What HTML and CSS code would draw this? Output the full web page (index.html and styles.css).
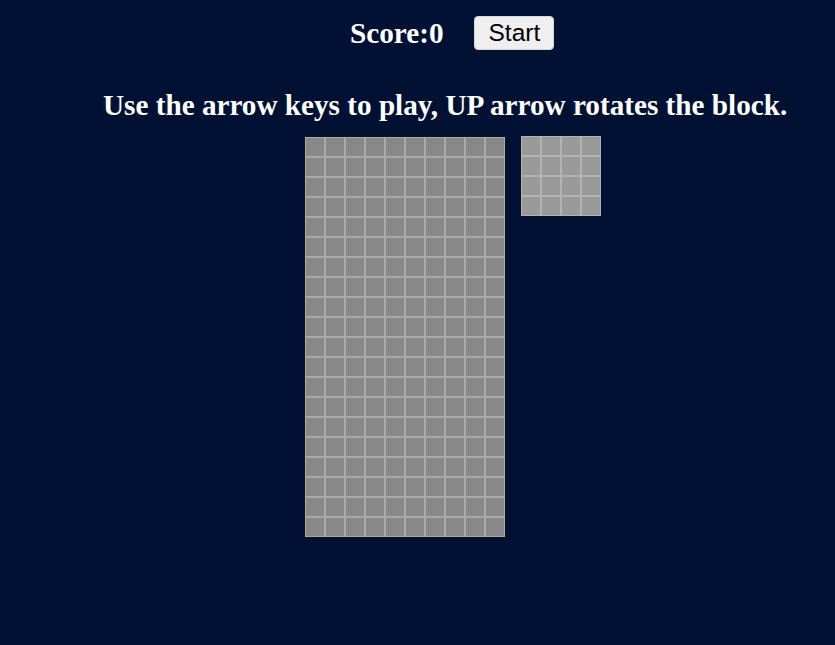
FILE: index.html
```html
<!DOCTYPE html>
<html>
<head>
<meta charset="utf-8">
<title>Tetris</title>
<link rel="stylesheet" href="styles.css">
</head>
<body>
<div class="top">
  <span class="score">Score:0</span>
  <button class="start">Start</button>
</div>
<h2 class="help">Use the arrow keys to play, UP arrow rotates the block.</h2>
<div class="game">
  <div class="board">
    <div class="c"></div><div class="c"></div><div class="c"></div><div class="c"></div><div class="c"></div><div class="c"></div><div class="c"></div><div class="c"></div><div class="c"></div><div class="c"></div>
    <div class="c"></div><div class="c"></div><div class="c"></div><div class="c"></div><div class="c"></div><div class="c"></div><div class="c"></div><div class="c"></div><div class="c"></div><div class="c"></div>
    <div class="c"></div><div class="c"></div><div class="c"></div><div class="c"></div><div class="c"></div><div class="c"></div><div class="c"></div><div class="c"></div><div class="c"></div><div class="c"></div>
    <div class="c"></div><div class="c"></div><div class="c"></div><div class="c"></div><div class="c"></div><div class="c"></div><div class="c"></div><div class="c"></div><div class="c"></div><div class="c"></div>
    <div class="c"></div><div class="c"></div><div class="c"></div><div class="c"></div><div class="c"></div><div class="c"></div><div class="c"></div><div class="c"></div><div class="c"></div><div class="c"></div>
    <div class="c"></div><div class="c"></div><div class="c"></div><div class="c"></div><div class="c"></div><div class="c"></div><div class="c"></div><div class="c"></div><div class="c"></div><div class="c"></div>
    <div class="c"></div><div class="c"></div><div class="c"></div><div class="c"></div><div class="c"></div><div class="c"></div><div class="c"></div><div class="c"></div><div class="c"></div><div class="c"></div>
    <div class="c"></div><div class="c"></div><div class="c"></div><div class="c"></div><div class="c"></div><div class="c"></div><div class="c"></div><div class="c"></div><div class="c"></div><div class="c"></div>
    <div class="c"></div><div class="c"></div><div class="c"></div><div class="c"></div><div class="c"></div><div class="c"></div><div class="c"></div><div class="c"></div><div class="c"></div><div class="c"></div>
    <div class="c"></div><div class="c"></div><div class="c"></div><div class="c"></div><div class="c"></div><div class="c"></div><div class="c"></div><div class="c"></div><div class="c"></div><div class="c"></div>
    <div class="c"></div><div class="c"></div><div class="c"></div><div class="c"></div><div class="c"></div><div class="c"></div><div class="c"></div><div class="c"></div><div class="c"></div><div class="c"></div>
    <div class="c"></div><div class="c"></div><div class="c"></div><div class="c"></div><div class="c"></div><div class="c"></div><div class="c"></div><div class="c"></div><div class="c"></div><div class="c"></div>
    <div class="c"></div><div class="c"></div><div class="c"></div><div class="c"></div><div class="c"></div><div class="c"></div><div class="c"></div><div class="c"></div><div class="c"></div><div class="c"></div>
    <div class="c"></div><div class="c"></div><div class="c"></div><div class="c"></div><div class="c"></div><div class="c"></div><div class="c"></div><div class="c"></div><div class="c"></div><div class="c"></div>
    <div class="c"></div><div class="c"></div><div class="c"></div><div class="c"></div><div class="c"></div><div class="c"></div><div class="c"></div><div class="c"></div><div class="c"></div><div class="c"></div>
    <div class="c"></div><div class="c"></div><div class="c"></div><div class="c"></div><div class="c"></div><div class="c"></div><div class="c"></div><div class="c"></div><div class="c"></div><div class="c"></div>
    <div class="c"></div><div class="c"></div><div class="c"></div><div class="c"></div><div class="c"></div><div class="c"></div><div class="c"></div><div class="c"></div><div class="c"></div><div class="c"></div>
    <div class="c"></div><div class="c"></div><div class="c"></div><div class="c"></div><div class="c"></div><div class="c"></div><div class="c"></div><div class="c"></div><div class="c"></div><div class="c"></div>
    <div class="c"></div><div class="c"></div><div class="c"></div><div class="c"></div><div class="c"></div><div class="c"></div><div class="c"></div><div class="c"></div><div class="c"></div><div class="c"></div>
    <div class="c"></div><div class="c"></div><div class="c"></div><div class="c"></div><div class="c"></div><div class="c"></div><div class="c"></div><div class="c"></div><div class="c"></div><div class="c"></div>
  </div>
  <div class="next">
    <div class="n"></div><div class="n"></div><div class="n"></div><div class="n"></div>
    <div class="n"></div><div class="n"></div><div class="n"></div><div class="n"></div>
    <div class="n"></div><div class="n"></div><div class="n"></div><div class="n"></div>
    <div class="n"></div><div class="n"></div><div class="n"></div><div class="n"></div>
  </div>
</div>
</body>
</html>
```
FILE: styles.css
```css
html, body {
  background: #001133;
}
body {
  margin: 8px;
  font-family: "Liberation Serif", "Times New Roman", serif;
  color: #ffffff;
}
.top {
  display: flex;
  align-items: center;
  gap: 31px;
  margin-top: 8px;
  padding-left: 342px;
  height: 34px;
}
.score {
  font-weight: bold;
  font-size: 29.2px;
  line-height: 33px;
}
.start {
  font-family: "Liberation Sans", Arial, sans-serif;
  font-size: 24.5px;
  line-height: 28px;
  height: 34px;
  padding: 0 13px;
  background: #efefef;
  color: #000;
  border: 1px solid #d6d6d6;
  border-radius: 4px;
}
.help {
  margin: 39px 0 0 0;
  padding-left: 95px;
  font-size: 29.2px;
  line-height: 33px;
  font-weight: bold;
  white-space: nowrap;
}
.game {
  display: flex;
  align-items: flex-start;
  gap: 15px;
  margin-top: 14px;
  padding-left: 296px;
}
.board {
  display: grid;
  grid-template-columns: repeat(10, 20px);
  grid-auto-rows: 20px;
  border: 1px solid #111;
}
.c {
  background: #888888;
  border: 1px solid #aaaaaa;
}
.next {
  display: grid;
  grid-template-columns: repeat(4, 20px);
  grid-auto-rows: 20px;
}
.n {
  background: #999999;
  border: 1px solid #b3b3b3;
}
```
